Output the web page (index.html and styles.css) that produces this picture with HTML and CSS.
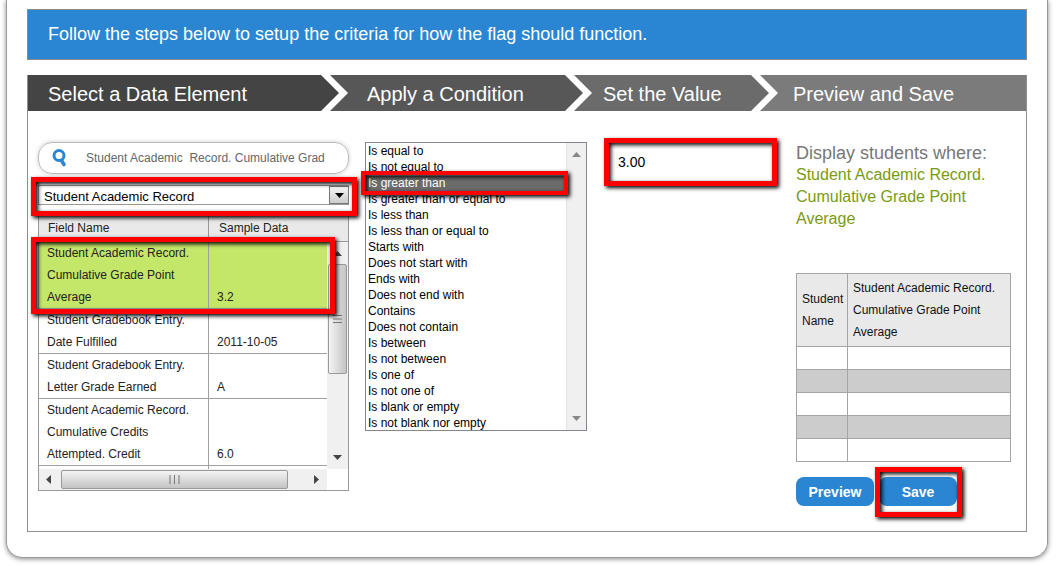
FILE: index.html
```html
<!DOCTYPE html>
<html lang="en">
<head>
<meta charset="utf-8">
<meta name="viewport" content="width=device-width, initial-scale=1">
<title>Flag criteria</title>
<link rel="stylesheet" href="styles.css">
</head>
<body>
<main class="card">
  <p class="banner">Follow the steps below to setup the criteria for how the flag should function.</p>
  <form class="panel">
    <header class="steps">
      <h2 class="step step-first">Select a Data Element</h2>
      <h2 class="step step-second">Apply a Condition</h2>
      <h2 class="step step-third">Set the Value</h2>
      <h2 class="step step-last">Preview and Save</h2>
    </header>
    <div class="columns">
      <section class="column">
        <div class="search">
          <svg class="search-icon" viewBox="0 0 16 18" aria-hidden="true">
            <ellipse cx="7" cy="6.500" rx="5" ry="5" fill="none" stroke="#2a86d3" stroke-width="3"/>
            <path d="M9.500 11.500 L12 15.500" stroke="#2a86d3" stroke-width="3.600" stroke-linecap="round"/>
          </svg>
          <input class="search-input" type="text" aria-label="Search fields" value="Student Academic  Record. Cumulative Grad">
        </div>
        <div class="source marked">
          <select class="source-select" aria-label="Data source">
            <option>Student Academic Record</option>
          </select>
          <span class="source-arrow" aria-hidden="true"><svg viewBox="0 0 9 5"><path d="M0 0H9L4.5 5Z"/></svg></span>
        </div>
        <div class="fields">
          <div class="fields-head"><span class="fields-name">Field Name</span><span class="fields-sample">Sample Data</span></div>
          <div class="fields-main">
            <div class="fields-row-mark marked"></div>
            <div class="fields-view">
              <table class="fields-table" aria-label="Fields">
                <tr class="chosen"><td>Student Academic Record. Cumulative Grade Point Average</td><td>3.2</td></tr>
                <tr><td>Student Gradebook Entry. Date Fulfilled</td><td>2011-10-05</td></tr>
                <tr><td>Student Gradebook Entry. Letter Grade Earned</td><td>A</td></tr>
                <tr><td>Student Academic Record. Cumulative Credits Attempted. Credit</td><td>6.0</td></tr>
                <tr><td>&nbsp;</td><td></td></tr>
              </table>
            </div>
            <div class="vbar" aria-hidden="true">
              <svg class="arrow-v" viewBox="0 0 9 5"><path d="M0 5H9L4.5 0Z"/></svg>
              <div class="vthumb"><svg class="grip-v" viewBox="0 0 9 8"><path d="M0 .5H9M0 4H9M0 7.5H9"/></svg></div>
              <svg class="arrow-v" viewBox="0 0 9 5"><path d="M0 0H9L4.5 5Z"/></svg>
            </div>
          </div>
          <div class="hbar" aria-hidden="true">
            <svg class="arrow-h" viewBox="0 0 5 9"><path d="M5 0V9L0 4.500Z"/></svg>
            <div class="hthumb"><svg class="grip-h" viewBox="0 0 11 9"><path d="M1 0V9M5.500 0V9M10 0V9"/></svg></div>
            <svg class="arrow-h" viewBox="0 0 5 9"><path d="M0 0V9L5 4.500Z"/></svg>
          </div>
        </div>
      </section>
      <section class="column">
        <div class="conditions marked">
          <select class="conditions-list" size="18" aria-label="Condition">
            <option>Is equal to</option>
            <option>Is not equal to</option>
            <option selected>Is greater than</option>
            <option>Is greater than or equal to</option>
            <option>Is less than</option>
            <option>Is less than or equal to</option>
            <option>Starts with</option>
            <option>Does not start with</option>
            <option>Ends with</option>
            <option>Does not end with</option>
            <option>Contains</option>
            <option>Does not contain</option>
            <option>Is between</option>
            <option>Is not between</option>
            <option>Is one of</option>
            <option>Is not one of</option>
            <option>Is blank or empty</option>
            <option>Is not blank nor empty</option>
          </select>
          <div class="list-bar" aria-hidden="true">
            <svg class="arrow-v arrow-dim" viewBox="0 0 9 5"><path d="M0 5H9L4.5 0Z"/></svg>
            <svg class="arrow-v arrow-dim" viewBox="0 0 9 5"><path d="M0 0H9L4.5 5Z"/></svg>
          </div>
        </div>
      </section>
      <section class="column">
        <div class="value marked"><input class="value-input" type="text" aria-label="Value" value="3.00"></div>
      </section>
      <section class="column column-preview">
        <p class="summary">Display students where:<span class="summary-field">Student Academic Record. Cumulative Grade Point Average</span></p>
        <table class="results">
          <tr><th class="results-name">Student Name</th><th>Student Academic Record. Cumulative Grade Point Average</th></tr>
          <tr><td></td><td></td></tr>
          <tr><td></td><td></td></tr>
          <tr><td></td><td></td></tr>
          <tr><td></td><td></td></tr>
          <tr><td></td><td></td></tr>
        </table>
        <div class="actions">
          <button class="button" type="button">Preview</button>
          <div class="save marked"><button class="button" type="button">Save</button></div>
        </div>
      </section>
    </div>
  </form>
</main>
</body>
</html>
```
FILE: styles.css
```css
*, *::after { box-sizing: border-box; }
body {
  margin: 0;
  background: #fff;
  color: #222;
  font: 12px/22px "Liberation Sans", Arial, sans-serif;
}
p, h2 { margin: 0; }
svg { display: block; }
input, select, button { font: inherit; color: inherit; margin: 0; }

.card {
  margin: 0 9px 8px 6px;
  padding: 9px 20px 25px;
  border: 1px solid #999;
  border-top: 0;
  border-radius: 0 0 16px 16px;
  box-shadow: 0 1px 5px #888;
}
.banner {
  padding: 0 20px;
  border: 1px solid #8c8c8c;
  background: #2a86d3;
  color: #fff;
  font-size: 18px;
  line-height: 49px;
}
.panel {
  margin-top: 15px;
  border: 1px solid #8f8f8f;
  border-top: 0;
}

/* Step headings, each cut to an arrow */
.steps {
  display: grid;
  grid-template-columns: 302fr 244fr 186fr 266fr;
}
.step {
  margin-right: -9px;
  color: #fff;
  font-size: 20px;
  font-weight: 400;
  line-height: 38px;
  height: 36px;
  white-space: nowrap;
  clip-path: polygon(0 0, calc(100% - 18px) 0, 100% 50%, calc(100% - 18px) 100%, 0 100%, 18px 50%);
}
.step-first {
  padding-left: 20px;
  background: #444;
  clip-path: polygon(0 0, calc(100% - 18px) 0, 100% 50%, calc(100% - 18px) 100%, 0 100%);
}
.step-second { padding-left: 37px; background: #575757; }
.step-third { padding-left: 29px; background: #6b6b6b; }
.step-last {
  margin-right: 0;
  padding-left: 33px;
  background: #7b7b7b;
  clip-path: polygon(0 0, 100% 0, 100% 100%, 0 100%, 18px 50%);
}

.columns {
  display: grid;
  grid-template-columns: 311fr 222fr 174fr 218fr;
  gap: 16px;
  padding: 31px 15px 25px 10px;
}
.column { min-width: 0; }
.column-preview { padding-left: 3px; }

/* Red callout frames laid over the controls */
.marked { position: relative; }
.marked::after {
  content: "";
  position: absolute;
  z-index: 2;
  border: 5px solid #f00;
  box-shadow: 2px 2px 4px #000, inset 2px 2px 4px #000;
  pointer-events: none;
}
.source::after { inset: -8px -8px -11px -7px; }
.fields-row-mark::after { inset: -5px -8px -5px -8px; }
.conditions::after { top: 28px; left: -5px; right: 18px; height: 24px; border-width: 4px; }
.value::after { inset: -4px 0 -4px 0; }
.save::after { inset: -10px -5px -11px -4px; }

.search {
  display: flex;
  align-items: center;
  gap: 18px;
  height: 32px;
  padding: 0 13px;
  border: 1px solid #bbb;
  border-radius: 14px;
  box-shadow: 0 0 4px #ccc;
}
.search-icon { flex: none; width: 16px; height: 18px; }
.search-input {
  flex: 1;
  min-width: 0;
  padding: 0;
  border: 0;
  background: none;
  color: #666;
  white-space: pre;
}

.source {
  display: flex;
  margin-top: 11px;
}
.source-select {
  appearance: none;
  width: 100%;
  height: 20px;
  padding: 0 24px 0 5px;
  border: 1px solid #999;
  border-radius: 0;
  background: #fff;
  color: #000;
  font-size: 13px;
}
.source-arrow {
  position: absolute;
  top: 1px;
  right: 0;
  display: grid;
  place-items: center;
  width: 20px;
  height: 18px;
  border: 1px solid #777;
  background: linear-gradient(#f4f4f4, #ccc);
  pointer-events: none;
}
.source-arrow svg { width: 9px; height: 5px; }

.fields {
  margin-top: 10px;
  border: 1px solid #999;
  border-top: 0;
}
.fields-head {
  display: flex;
  height: 27px;
  border-bottom: 1px solid #999;
  background: #e9e9e9;
  line-height: 26px;
}
.fields-name { width: 170px; padding-left: 9px; border-right: 1px solid #999; }
.fields-sample { padding-left: 10px; }
.fields-main {
  position: relative;
  display: flex;
  height: 227px;
}
.fields-row-mark {
  position: absolute;
  inset: 0 21px auto 0;
  height: 67px;
}
.fields-view { flex: 1; overflow: hidden; }
.fields-table {
  width: 100%;
  border-collapse: separate;
  border-spacing: 0;
  table-layout: fixed;
}
.fields-table td {
  padding: 0 8px;
  border-bottom: 1px solid #a0a0a0;
  vertical-align: bottom;
}
.fields-table td:first-child { width: 170px; border-right: 1px solid #a0a0a0; }
.chosen { background: #c4e76a; }

.vbar {
  display: flex;
  flex-direction: column;
  align-items: center;
  justify-content: space-between;
  width: 21px;
  padding: 9px 1px;
  background: #f0f0f0;
}
.arrow-v { width: 9px; height: 5px; fill: #444; }
.arrow-h { width: 5px; height: 9px; fill: #444; }
.arrow-dim { fill: #888; }
.vthumb {
  display: grid;
  place-items: center;
  width: 19px;
  height: 110px;
  margin: 8px 0 auto;
  border: 1px solid #999;
  border-radius: 2px;
  background: linear-gradient(90deg, #f4f4f4, #dcdcdc 50%, #c4c4c6);
}
.grip-v { width: 9px; height: 8px; stroke: #777; }
.grip-h { width: 11px; height: 9px; stroke: #777; }
.hbar {
  display: flex;
  align-items: center;
  height: 21px;
  margin-right: 21px;
  padding: 0 8px 0 7px;
  background: #f0f0f0;
}
.hthumb {
  display: grid;
  place-items: center;
  width: 227px;
  height: 19px;
  margin: 0 auto 0 10px;
  border: 1px solid #999;
  border-radius: 2px;
  background: linear-gradient(#f4f4f4, #dcdcdc 50%, #c4c4c6);
}

.conditions {
  display: flex;
  border: 1px solid #828790;
}
.conditions-list {
  flex: 1;
  min-width: 0;
  height: 287px;
  padding: 1px 0 0;
  border: 0;
  border-radius: 0;
  outline: 0;
  overflow: hidden;
  background: #fff;
  color: #000;
  font-size: 12px;
}
.conditions-list option {
  height: 16px;
  min-height: 16px;
  padding: 0 2px;
  line-height: 16px;
}
.conditions-list option:checked {
  background: linear-gradient(#6b6b6b, #6b6b6b);
  -webkit-text-fill-color: #fff;
}
.list-bar {
  display: flex;
  flex-direction: column;
  align-items: center;
  justify-content: space-between;
  width: 20px;
  padding: 9px 0;
  border-left: 1px solid #e4e4e4;
  background: #f0f0f0;
}

.value { margin-left: 1px; }
.value-input {
  display: block;
  width: 100%;
  height: 40px;
  padding: 0 13px;
  border: 1px solid #888;
  color: #000;
  font-size: 14px;
}

.summary { color: #777; font-size: 18px; }
.summary-field { display: block; color: #7a9a12; font-size: 16px; }
.results {
  width: 100%;
  margin-top: 43px;
  border-collapse: collapse;
  color: #111;
  table-layout: fixed;
}
.results th, .results td { border: 1px solid #a5a5a5; }
.results th {
  padding: 3px 0 3px 5px;
  background: #e9e9e9;
  font-weight: 400;
  text-align: left;
}
.results th:last-child { padding-right: 8px; }
.results-name { width: 51px; }
.results td { height: 23px; padding: 0; }
.results tr:nth-child(odd) td { background: #ccc; }
.actions {
  display: flex;
  gap: 5px;
  margin-top: 15px;
}
.button {
  display: block;
  width: 78px;
  height: 29px;
  padding: 0;
  border: 0;
  border-radius: 8px;
  background: #2a86d3;
  color: #fff;
  font-size: 14px;
  font-weight: 700;
}
```
